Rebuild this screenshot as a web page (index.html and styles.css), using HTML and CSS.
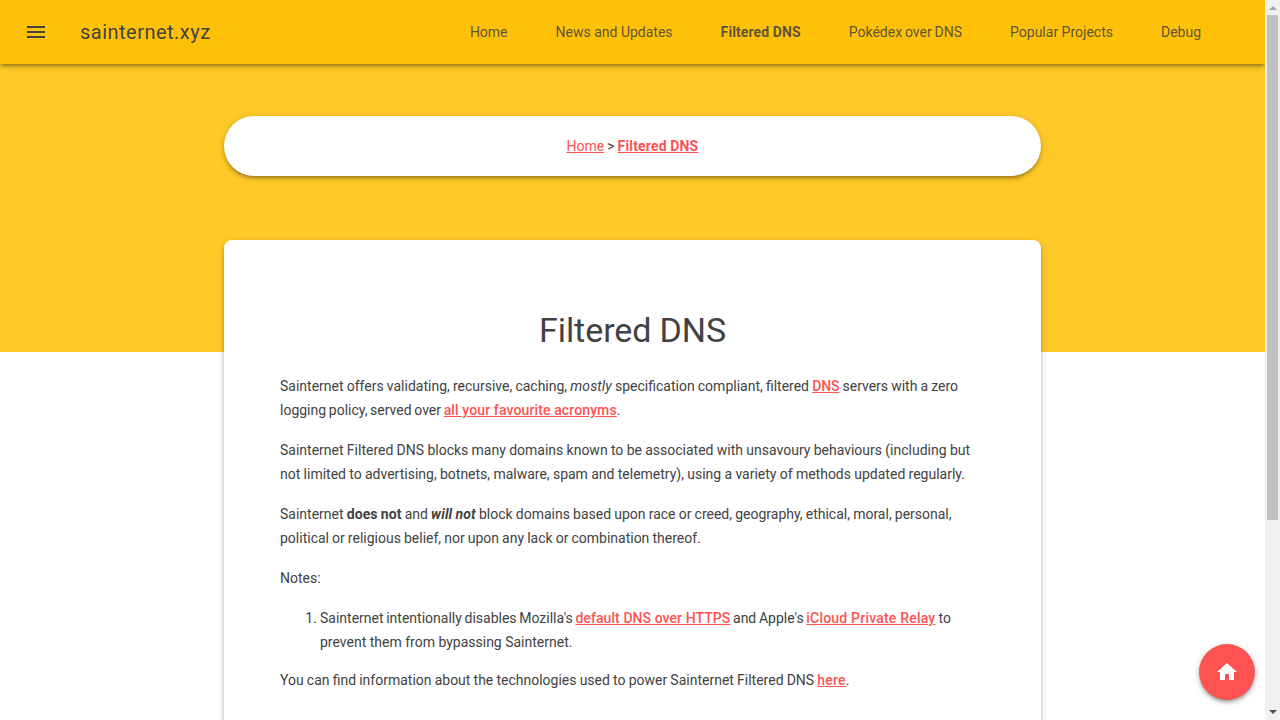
FILE: index.html
```html
<!DOCTYPE html>
<html lang="en">
<head>
<meta charset="utf-8">
<title>Filtered DNS - sainternet.xyz</title>
<link rel="stylesheet" href="styles.css">
</head>
<body>
<div class="app">
  <div class="page">
    <header class="header">
      <svg class="menu" viewBox="0 0 24 24"><path d="M3 18h18v-2H3v2zm0-5h18v-2H3v2zm0-7v2h18V6H3z"/></svg>
      <span class="title">sainternet.xyz</span>
      <nav class="nav">
        <a>Home</a><a>News and Updates</a><a class="active">Filtered DNS</a><a class="narrow">Pokédex over DNS</a><a>Popular Projects</a><a>Debug</a>
      </nav>
    </header>
    <main class="main">
      <div class="crumbs"><p><a class="link plain">Home</a> &gt; <a class="link strong">Filtered DNS</a></p></div>
      <article class="card">
        <h1>Filtered DNS</h1>
        <p>Sainternet offers validating, recursive, caching, <em>mostly</em> specification compliant, filtered <a class="link short">DNS</a><span class="tight"> servers with a zero</span><br><span class="tighter">logging policy, served over </span><a class="link">all your favourite acronyms</a>.</p>
        <p class="loose">Sainternet Filtered DNS blocks many domains known to be associated with unsavoury behaviours (including but<br>not limited to advertising, botnets, malware, spam and telemetry), using a variety of methods updated regularly.</p>
        <p>Sainternet <strong>does not</strong> and <strong><em>will not</em></strong> block domains based upon race or creed, geography, ethical, moral, personal,<br><span class="tight">political or religious belief, nor upon any lack or combination thereof.</span></p>
        <p>Notes:</p>
        <ol><li><span class="tighter">Sainternet intentionally disables Mozilla's </span><a class="link short-list">default DNS over HTTPS</a><span class="tighter"> and Apple's </span><a class="link wide">iCloud Private Relay</a> to<br><span class="normal">prevent them from bypassing Sainternet.</span></li></ol>
        <p>You can find information about the technologies used to power Sainternet Filtered DNS <a class="link wide">here</a>.</p>
      </article>
    </main>
    <a class="fab"><svg viewBox="0 0 24 24"><path d="M10 20v-6h4v6h5v-8h3L12 3 2 12h3v8z"/></svg></a>
  </div>
  <div class="scrollbar"><i class="arrow up"></i><i class="thumb"></i><i class="arrow down"></i></div>
</div>
</body>
</html>
```
FILE: styles.css
```css
* { box-sizing: border-box; }
body { margin: 0; overflow: hidden; font: 400 14px/24px Roboto, sans-serif; color: #424242; background: #fff; }
.app { display: flex; height: 720px; overflow: hidden; }
.page { flex: 1; display: flex; flex-direction: column; position: relative; overflow: hidden; background: linear-gradient(#ffca28 352px, #fff 352px); }
.header { flex: none; height: 64px; display: flex; align-items: center; padding: 0 40px 0 24px; background: #ffc107; color: #424242; z-index: 1; }
.header, .crumbs, .card { box-shadow: 0 3px 4px 0 rgba(0,0,0,.18), 0 3px 3px -2px rgba(0,0,0,.22), 0 1px 7px 0 rgba(0,0,0,.14); }
.menu { width: 24px; height: 24px; fill: #424242; margin-right: 32px; }
.title { font-size: 20px; letter-spacing: .48px; line-height: 1; }
.nav { margin-left: auto; display: flex; }
.nav a { padding: 0 24px; color: rgba(66,66,66,.87); }
.nav .active { font-weight: 700; letter-spacing: .1px; }
.nav .narrow { word-spacing: -.6px; }
.main { flex: 1; width: 817px; margin: 52px auto 0; }
.crumbs { height: 60px; border-radius: 30px; background: #fff; display: flex; align-items: center; justify-content: center; }
.crumbs p { margin: 0; word-spacing: -.5px; }
.link { color: #ff5252; font-weight: 500; text-decoration: underline; word-spacing: 0; letter-spacing: .12px; }
.wide { letter-spacing: .2px; }
.short { letter-spacing: -.1px; }
.short-list { letter-spacing: .07px; }
.plain { font-weight: 400; letter-spacing: 0; }
.strong { font-weight: 700; letter-spacing: .16px; }
.card { height: 600px; margin-top: 64px; padding: 66px 56px 0; border-radius: 8px; background: #fff; word-spacing: -.32px; }
.card em { letter-spacing: .12px; }
.card strong { letter-spacing: .08px; }
.loose { word-spacing: -.18px; }
.tight { word-spacing: -.4px; }
.tighter { word-spacing: -.8px; }
.normal { word-spacing: 0; }
h1 { margin: 0 0 20px; font-size: 34px; line-height: 48px; font-weight: 400; text-align: center; letter-spacing: -.06px; }
.card p { margin: 0 0 16px; white-space: nowrap; }
ol { margin: 16px 0 14px; padding-left: 40px; white-space: nowrap; }
.fab { position: absolute; right: 10px; bottom: 20px; width: 56px; height: 56px; border-radius: 50%; background: #ff5252; display: flex; align-items: center; justify-content: center; box-shadow: 0 3px 4px 0 rgba(0,0,0,.18), 0 3px 3px -2px rgba(0,0,0,.22), 0 1px 7px 0 rgba(0,0,0,.14); }
.fab svg { width: 24px; height: 24px; fill: #fff; }
.scrollbar { width: 15px; background: #f1f1f1; display: flex; flex-direction: column; align-items: center; }
.thumb { width: 11px; height: 505px; margin-top: 5px; background: #c1c1c1; }
.arrow { border: 4px solid transparent; width: 0; height: 0; }
.up { border-top: 0; border-bottom-color: #a3a3a3; margin-top: 6px; }
.down { border-bottom: 0; border-top-color: #505050; margin: auto 0 6px; }
```
